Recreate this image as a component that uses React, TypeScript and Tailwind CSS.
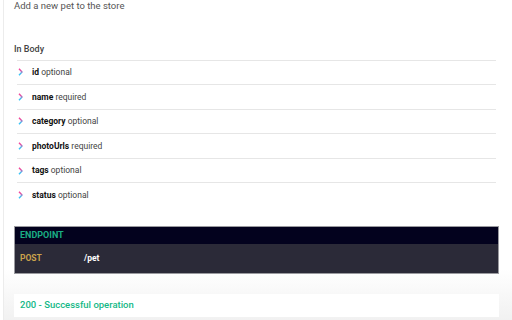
import React from "react";

type Param = { name: string; required: boolean };

const params: Param[] = [
  { name: "id", required: false },
  { name: "name", required: true },
  { name: "category", required: false },
  { name: "photoUrls", required: true },
  { name: "tags", required: false },
  { name: "status", required: false },
];

function Chevron() {
  return (
    <svg width="5" height="8" viewBox="0 0 5 8" className="shrink-0">
      <defs>
        <linearGradient id="chev" x1="0" y1="0" x2="0" y2="1">
          <stop offset="0.2" stopColor="#f2449a" />
          <stop offset="0.8" stopColor="#38c4f6" />
        </linearGradient>
      </defs>
      <path d="M1 0.8 L4 4 L1 7.2" fill="none" stroke="url(#chev)" strokeWidth="1.4" />
    </svg>
  );
}

function ParamRow({ param }: { param: Param }) {
  return (
    <div className="flex items-center gap-[9px] h-[24.6px] border-t border-[#e6e6e6] pl-[1px]">
      <Chevron />
      <div className="text-[8.5px] text-[#111]">
        <span className="font-bold">{param.name}</span>{" "}
        <span className="text-[#444]">{param.required ? "required" : "optional"}</span>
      </div>
    </div>
  );
}

export default function App() {
  return (
    <div
      className="w-[509px] h-[320px] overflow-hidden bg-gradient-to-b from-white from-[84%] to-[#f1f1f1] border-l border-[#ececec] ml-[3px]"
      style={{ fontFamily: "Roboto, 'Liberation Sans', sans-serif" }}
    >
      <div className="pl-[10px] pr-[14px]">
        <div className="text-[9.5px] text-[#555] leading-none mt-[1px]">Add a new pet to the store</div>

        <div className="mt-[34px] text-[9px] font-medium text-[#444] leading-none">In Body</div>

        <div className="mt-[6px] ml-[3px] mr-[2px]">
          {params.map((p) => (
            <ParamRow key={p.name} param={p} />
          ))}
        </div>

        <div className="mt-[19px] border border-[#9a9a9f] w-[485px]">
          <div className="bg-[#03021e] h-[17px] flex items-center px-[5px]">
            <span className="text-[9px] font-bold text-[#1aae84]">ENDPOINT</span>
          </div>
          <div className="bg-[#2b2a38] h-[29px] flex items-center px-[5px]">
            <span className="w-[64px] text-[8.5px] font-bold text-[#c9a24c]">POST</span>
            <span className="text-[8.5px] font-bold text-white">/pet</span>
          </div>
        </div>

        <div className="mt-[20px] bg-white w-[485px] h-[23px] flex items-center px-[6px]">
          <span className="text-[9.5px] font-medium text-[#14b886]">200 - Successful operation</span>
        </div>
      </div>
    </div>
  );
}
